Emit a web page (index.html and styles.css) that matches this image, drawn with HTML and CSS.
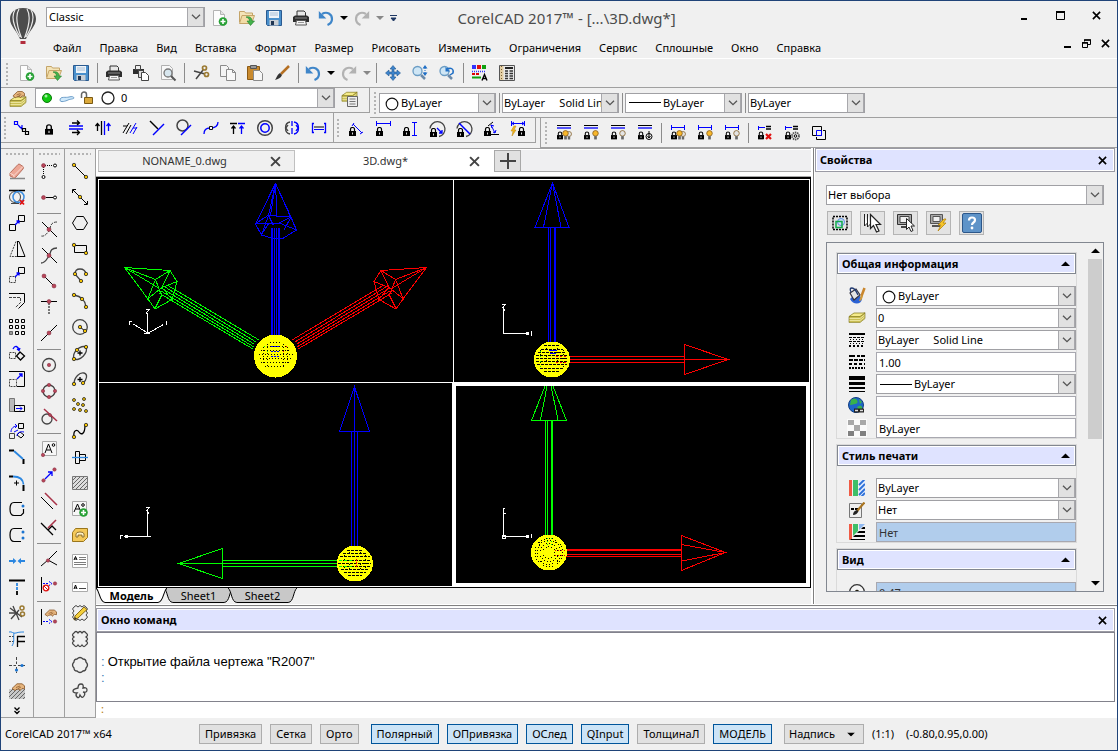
FILE: index.html
```
<!DOCTYPE html>
<html lang="ru">
<head>
<meta charset="utf-8">
<title>CorelCAD 2017</title>
<link rel="stylesheet" href="styles.css">
</head>
<body>
<svg class="defs" aria-hidden="true">
  <symbol id="new" viewBox="0 0 16 16"><path d="M1.500 .5h7l4 4v11h-11z" fill="#fdfdfd" stroke="#b4b4b4"/><path d="M8.500 .5v4h4" fill="#e4e4e4" stroke="#b4b4b4"/><circle cx="11" cy="11.500" r="4.300" fill="#27a135"/><path d="M11 9v5M8.500 11.500h5" stroke="#fff" stroke-width="1.600"/></symbol>
  <symbol id="open" viewBox="0 0 16 16"><path d="M.5 12V1.500h5l1 1.500h7v4" fill="#f4e4b8" stroke="#c4a468"/><path d="M3 5.500h12.500l-3 8H.5z" fill="#f2dca6" stroke="#c4a468"/><path d="M7 7c4-1 6 1 6 4h2.500l-4 4.500L8 11h2.500c0-2-1-3-3.500-4z" fill="#45b24c" stroke="#23802b" stroke-width=".6"/></symbol>
  <symbol id="save" viewBox="0 0 16 16"><path d="M.5 .5h15v15h-14l-1-1z" fill="#4a90cc" stroke="#2a5a90"/><path d="M3 1h10v7H3z" fill="#eef3f8"/><path d="M4 3h8M4 5h8" stroke="#a8c0d8"/><path d="M3.500 10h9v5.500h-9z" fill="#c9ced4"/><path d="M5 11h3v4H5z" fill="#1f3552"/></symbol>
  <symbol id="print" viewBox="0 0 16 16"><path d="M4 6V1h7l1.500 1.500V6" fill="#e8e8e8" stroke="#333"/><path d="M0 7l2-1.500h12L16 7v5H0z" fill="#2e2e2e"/><path d="M2 8h12" stroke="#8a8a8a"/><path d="M3.500 10.500h9l1 4.500h-11z" fill="#f4f4f4" stroke="#555"/><path d="M5 12.500h6" stroke="#999"/></symbol>
  <symbol id="undo" viewBox="0 0 16 16"><path d="M4 4C9 1 14 4 14 9c0 3-2 5-4.500 6" fill="none" stroke="#3f86c9" stroke-width="2.200"/><path d="M.8 1v7.500h7.500z" fill="#3f86c9"/></symbol>
  <symbol id="redo" viewBox="0 0 16 16"><path d="M12 4C7 1 2 4 2 9c0 3 2 5 4.500 6" fill="none" stroke="#b2b2b2" stroke-width="2.200"/><path d="M15.200 1v7.500H7.700z" fill="#b2b2b2"/></symbol>
  <symbol id="down" viewBox="0 0 8 4"><path d="M0 0h8L4 4z" fill="currentColor"/></symbol>
  <symbol id="chev" viewBox="0 0 10 6"><path d="M1 .7l4 4 4-4" fill="none" stroke="#555" stroke-width="1.300"/></symbol>
  <symbol id="x" viewBox="0 0 10 10"><path d="M1 1l8 8M9 1L1 9" fill="none" stroke="currentColor" stroke-width="1.800"/></symbol>
  <symbol id="lock" viewBox="0 0 7 9"><path d="M1.500 4V2.200a2 1.700 0 0 1 4 0V4" fill="none" stroke="#000" stroke-width="1.200"/><path d="M0 4h7v5H0z"/><path d="M3.500 5.500v2" stroke="#ddd"/></symbol>
  <symbol id="bulb" viewBox="0 0 6 9"><circle cx="3" cy="3" r="2.500" fill="currentColor" stroke="#805a20" stroke-width=".7"/><path d="M1.800 5.500h2.400V8.500H1.800z" fill="#666"/></symbol>
  <symbol id="layers" viewBox="0 0 18 12"><path d="M1 4.500v6h11l5-4v-6z" fill="#c9be52"/><path d="M1 4.500L6 1h11l-5 3.500z" fill="#f5eb8a" stroke="#8b8126" stroke-width=".8"/><path d="M1 6.500h11l5-4M1 8.500h11l5-4M1 10.500h11l5-4" fill="none" stroke="#f3ecae" stroke-width=".8"/><path d="M1 4.500v6h11l5-4v-6" fill="none" stroke="#7a711d" stroke-width=".6"/></symbol>
  <symbol id="hand" viewBox="0 0 14 8"><path d="M1 5.500L6 .8h5l2.500 2v3l-2.500-.3-2 2-1-1.500-3 .5-1 1z" fill="#e6b57e" stroke="#835123" stroke-width=".8"/><path d="M5 4.500l4-1.500M7 5.500l3-1.500" stroke="#835123" stroke-width=".7"/></symbol>
  <symbol id="hatch" viewBox="0 0 16 10"><path d="M0 0h16v10H0z" fill="#c8c8c8"/><path d="M0 4l4-4M0 8l8-8M2 10L12 0M6 10L16 0M10 10l6-6M14 10l2-2" stroke="#666"/></symbol>
  <symbol id="ring" viewBox="0 0 12 12"><circle cx="6" cy="6" r="5" fill="#fff" stroke="#111"/></symbol>
</svg>
<div class="window">
  <header class="head">
    <svg class="logo" viewBox="0 0 28 38" aria-label="CorelCAD"><path d="M14 1C5 1 1 6 1 12c0 7 7 12 10 20h6c3-8 10-13 10-20 0-6-4-11-13-11z" fill="#4c4c4c"/><path d="M10 2C7 7 7 17 12.500 31M18 2c3 5 3 15-2.500 29M6 3C2 9 4 18 11 30M22 3c4 6 2 15-5 27" fill="none" stroke="#e9e9e9" stroke-width="1.200"/><path d="M11.500 32h5l-.5 1.500h-4z" fill="#eee"/><path d="M11.500 34h5v3h-5z" fill="#b22d3c"/></svg>
    <div class="head-main">
      <div class="titlebar">
        <div class="combo workspace"><select aria-label="Рабочее пространство"><option>Classic</option></select><span class="arr"><svg width="10" height="6"><use href="#chev"/></svg></span></div>
        <div class="quick">
          <button aria-label="Создать"><svg class="i"><use href="#new"/></svg></button>
          <button aria-label="Открыть"><svg class="i"><use href="#open"/></svg></button>
          <button aria-label="Сохранить"><svg class="i"><use href="#save"/></svg></button>
          <button aria-label="Печать"><svg class="i"><use href="#print"/></svg></button>
          <button class="slim" aria-label="Отменить"><svg class="i"><use href="#undo"/></svg></button>
          <button class="caret" aria-label="История отмены"><svg width="8" height="4"><use href="#down"/></svg></button>
          <button class="slim" aria-label="Повторить"><svg class="i"><use href="#redo"/></svg></button>
          <button class="caret dim" aria-label="История повтора"><svg width="8" height="4"><use href="#down"/></svg></button>
          <button class="caret more" aria-label="Настроить"><svg width="7" height="7" viewBox="0 0 7 7"><path d="M0 .5h7M1 3h5L3.500 6z" fill="#1f3864" stroke="#1f3864"/></svg></button>
        </div>
        <h1>CorelCAD 2017™ - [...\3D.dwg*]</h1>
        <div class="winbtns">
          <button aria-label="Свернуть"><svg width="9" height="9"><path d="M1 8h6" stroke="#000" stroke-width="2"/></svg></button>
          <button aria-label="Развернуть"><svg width="9" height="9"><path d="M.5 0v8.500h8V0" fill="none" stroke="#000"/><path d="M0 1h9" stroke="#000" stroke-width="2"/></svg></button>
          <button aria-label="Закрыть"><svg width="9" height="9"><use href="#x"/></svg></button>
        </div>
      </div>
      <div class="menubar">
        <nav>
          <a href="#">Файл</a><a href="#">Правка</a><a href="#">Вид</a><a href="#">Вставка</a><a href="#">Формат</a><a href="#">Размер</a><a href="#">Рисовать</a><a href="#">Изменить</a><a href="#">Ограничения</a><a href="#">Сервис</a><a href="#">Сплошные</a><a href="#">Окно</a><a href="#">Справка</a>
        </nav>
        <div class="mdi">
          <button aria-label="Свернуть чертёж"><svg width="9" height="9"><path d="M1 8h7" stroke="#000" stroke-width="2"/></svg></button>
          <button aria-label="Восстановить чертёж"><svg width="9" height="9"><path d="M2.500 2.500V1h6v4.500H6M.5 3.500h5v5h-5z" fill="none" stroke="#000"/><path d="M2 1h7M0 4h6" stroke="#000" stroke-width="1.500"/></svg></button>
          <button aria-label="Закрыть чертёж"><svg width="9" height="9"><use href="#x"/></svg></button>
        </div>
      </div>
    </div>
  </header>

  <div class="bar std">
    <i class="grip"></i>
    <button aria-label="Создать"><svg class="i"><use href="#new"/></svg></button>
    <button aria-label="Открыть"><svg class="i"><use href="#open"/></svg></button>
    <button aria-label="Сохранить"><svg class="i"><use href="#save"/></svg></button>
    <i class="sep"></i>
    <button aria-label="Печать"><svg class="i"><use href="#print"/></svg></button>
    <button aria-label="Пакетная печать"><svg class="i" viewBox="0 0 16 16"><path d="M0 4h11v5H0z" fill="#2e2e2e"/><path d="M2.500 .5h5v4h-5z" fill="#eee" stroke="#444"/><path d="M5.500 5.500h5v7h-5z" fill="#ddd" stroke="#444"/><path d="M8.500 7.500h4l3 3v5h-7z" fill="#fff" stroke="#444"/></svg></button>
    <button aria-label="Просмотр печати"><svg class="i" viewBox="0 0 16 16"><path d="M1.500 .5h8l3 3v11h-11z" fill="#f8f8f8" stroke="#b0b0b0"/><circle cx="8" cy="8" r="4" fill="#d7e6ee" stroke="#777" stroke-width="1.300"/><path d="M11 11l4.500 4.500" stroke="#555" stroke-width="2"/></svg></button>
    <i class="sep"></i>
    <button aria-label="Вырезать"><svg class="i" viewBox="0 0 16 16"><path d="M1 6l11 3M3 14l7-9" stroke="#444" stroke-width="1.500"/><circle cx="11.500" cy="3" r="2" fill="none" stroke="#9b7a32" stroke-width="1.700"/><circle cx="13.500" cy="9.500" r="2" fill="none" stroke="#9b7a32" stroke-width="1.700"/></svg></button>
    <button aria-label="Копировать"><svg class="i" viewBox="0 0 16 16"><path d="M.5 .5h6l2 2v9h-8z" fill="#f4f4f4" stroke="#8a8a8a"/><path d="M6.500 4.500h6l3 3v8h-9z" fill="#f8f8f8" stroke="#8a8a8a"/><path d="M12.500 4.500v3h3" fill="none" stroke="#8a8a8a"/></svg></button>
    <button aria-label="Вставить"><svg class="i" viewBox="0 0 16 16"><path d="M.5 1.500h12v13H.5z" fill="#c98a2e" stroke="#8b5a14"/><path d="M3.500 .5h6v3h-6z" fill="#999" stroke="#555"/><path d="M6.500 5.500h6l3 3v7h-9z" fill="#f6f6f6" stroke="#8a8a8a"/></svg></button>
    <button aria-label="Копировать свойства"><svg class="i" viewBox="0 0 16 16"><path d="M15 1L7 9" stroke="#b56f22" stroke-width="2.500"/><path d="M8 10L6 8c-3 2-3 4-5 7 3-1 6-2 7-5z" fill="#333"/></svg></button>
    <i class="sep"></i>
    <button class="slim" aria-label="Отменить"><svg class="i"><use href="#undo"/></svg></button>
    <button class="caret" aria-label="История отмены"><svg width="8" height="4"><use href="#down"/></svg></button>
    <button class="slim" aria-label="Повторить"><svg class="i"><use href="#redo"/></svg></button>
    <button class="caret dim" aria-label="История повтора"><svg width="8" height="4"><use href="#down"/></svg></button>
    <i class="sep"></i>
    <button aria-label="Панорамирование"><svg class="i" viewBox="0 0 16 16"><path d="M8 .5l3 3.500H9v3h3V5l3.500 3-3.500 3V9H9v3h2l-3 3.500L5 12h2V9H4v2L.5 8 4 5v2h3V4H5z" fill="#3d84cc" stroke="#22588f" stroke-width=".6"/></svg></button>
    <button aria-label="Масштаб"><svg class="i" viewBox="0 0 16 16"><circle cx="5.500" cy="6" r="4.500" fill="#cfe6f5" stroke="#6a9cc4" stroke-width="1.300"/><path d="M9 10l4 4" stroke="#6a8aaa" stroke-width="2.500"/><path d="M13 0l2.500 3.500h-5zM13 11l2.500-3.500h-5z" fill="#1f6fc6"/><path d="M13 3v5" stroke="#1f6fc6" stroke-dasharray="1 1"/></svg></button>
    <button aria-label="Предыдущий вид"><svg class="i" viewBox="0 0 16 16"><circle cx="5.500" cy="6" r="4.500" fill="#cfe6f5" stroke="#6a9cc4" stroke-width="1.300"/><path d="M9 10l4 4" stroke="#6a8aaa" stroke-width="2.500"/><path d="M8 4c4-2 7 0 6 4l-3 2" fill="none" stroke="#1f6fc6" stroke-width="1.500"/><path d="M6.500 2v4.500H11z" fill="#1f6fc6"/></svg></button>
    <i class="sep"></i>
    <button aria-label="Свойства объектов"><svg class="i" viewBox="0 0 16 16"><path d="M0 0h4v4H0z" fill="#33f"/><path d="M5 0h4v4H5z" fill="#e01010"/><path d="M10 0h4v4h-4z" fill="#10a010"/><path d="M0 6.500h14" stroke="#33f" stroke-width="1.500" stroke-dasharray="1 1"/><path d="M0 9h8" stroke="#d00" stroke-width="2" stroke-dasharray="3 1"/><path d="M0 12.500h9" stroke="#10a010" stroke-width="2"/><path d="M10 15.500l2.500-6 2.500 6M11 13.500h3" fill="none" stroke="#000" stroke-width="1.400"/></svg></button>
    <button aria-label="Палитра"><svg class="i" viewBox="0 0 16 16"><path d="M.5 .5h15v15H.5z" fill="#e8e8e8" stroke="#555"/><path d="M1 1h3.500v14H1z" fill="#e4cfa4"/><path d="M2.500 1v14" stroke="#7a5e33" stroke-dasharray="1 2"/><path d="M6 3h8" stroke="#222" stroke-width="2"/><path d="M6 6h3M10.500 6H14M6 8.500h3M10.500 8.500H14M6 11h3M10.500 11H14M6 13.500h3M10.500 13.500H14" stroke="#333" stroke-width="1.300"/></svg></button>
  </div>

  <div class="bands">
    <div class="band layers">
      <button class="lay" aria-label="Менеджер слоёв"><svg width="18" height="18" viewBox="0 0 18 18"><use href="#layers" y="6" width="18" height="12"/><use href="#hand" x="3" width="13" height="9"/></svg></button>
      <div class="combo layer">
        <span class="pre"><svg width="76" height="14" viewBox="0 0 76 14"><circle cx="6" cy="7" r="4.500" fill="#12c912" stroke="#0a7a0a"/><circle cx="5" cy="5" r="1.500" fill="#a6f0a6"/><path d="M19 9c0-4 6-2 9-3s5 0 5 1-4 1-6 2-8 3-8 0z" fill="#cfe9fb" stroke="#6f9fca"/><path d="M40.500 7V3.500a2.500 2.500 0 0 1 5 0V7" fill="none" stroke="#666" stroke-width="1.500"/><path d="M43.500 6.500h8v6h-8z" fill="#dba93c" stroke="#7a5a14"/><circle cx="67" cy="7" r="6" fill="#fff" stroke="#222" stroke-width="1.300"/></svg></span>
        <select aria-label="Слой"><option>0</option></select><span class="arr"><svg width="10" height="6"><use href="#chev"/></svg></span></div>
      <button class="lay" aria-label="Свойства слоя"><svg width="18" height="16" viewBox="0 0 18 16"><use href="#layers" width="17" height="12"/><path d="M6.500 5.500h10v10h-10z" fill="#eee" stroke="#666"/><path d="M8.500 8h6M8.500 10.500h6M8.500 13h6" stroke="#777"/></svg></button>
    </div>
    <div class="band props-bar">
      <i class="grip"></i>
      <div class="combo"><span class="pre ringed"><svg width="14" height="14"><use href="#ring"/></svg></span><select aria-label="Цвет линии"><option>ByLayer</option></select><span class="arr"><svg width="10" height="6"><use href="#chev"/></svg></span></div>
      <i class="sep"></i>
      <div class="combo"><select aria-label="Стиль линии"><option>ByLayer &nbsp; &nbsp; Solid Line</option></select><span class="arr"><svg width="10" height="6"><use href="#chev"/></svg></span></div>
      <i class="sep"></i>
      <div class="combo"><span class="pre tight"><svg width="32" height="3"><path d="M0 1.500h32" stroke="#000"/></svg></span><select aria-label="Толщина линии"><option>ByLayer</option></select><span class="arr"><svg width="10" height="6"><use href="#chev"/></svg></span></div>
      <i class="sep"></i>
      <div class="combo"><select aria-label="Стиль печати"><option>ByLayer</option></select><span class="arr"><svg width="10" height="6"><use href="#chev"/></svg></span></div>
    </div>
    <div class="band geo">
      <i class="grip"></i>
      <button aria-label="Совпадение"><svg class="i" viewBox="0 0 16 16"><path class="b" d="M.5 1.500h3v3h-3zM4 5l5 5M5.500 7.500H8V5" stroke-width="1.200"/><path class="k" d="M8.500 8.500h3v3h-3zM11.500 11.500h3v3h-3z" stroke-width="1.200"/></svg></button>
      <button aria-label="Фиксация"><svg class="i" viewBox="0 0 16 16"><use href="#lock" x="4" y="4" width="8" height="11"/></svg></button>
      <button aria-label="Горизонтальность"><svg class="i" viewBox="0 0 16 16"><path class="b" d="M1 6h14M1 9h14" stroke-width="1.500"/><path class="k" d="M4 3h7M9 .5L11.500 3 9 5M4 12.500h7M9 10l2.500 2.500L9 15" stroke-width="1.300"/></svg></button>
      <button aria-label="Вертикальность"><svg class="i" viewBox="0 0 16 16"><path class="b" d="M9.500 1v14M13.500 3v8M11.500 6l2-2.500 2 2.500" stroke-width="1.300"/><path class="k" d="M6.500 1v14M2.500 3v8M.5 6l2-2.500 2 2.500" stroke-width="1.300"/></svg></button>
      <button aria-label="Параллельность"><svg class="i" viewBox="0 0 16 16"><path class="k" d="M1 13L7 3M4 14l5-9M1 6h4"/><path class="b" d="M8 13l6-10M11 14l4-7M11 8h4"/></svg></button>
      <button aria-label="Перпендикулярность"><svg class="i" viewBox="0 0 16 16"><path class="k" d="M1 1l8 8" stroke-width="1.500"/><path class="b" d="M4 15L15 4" stroke-width="1.500"/></svg></button>
      <button aria-label="Касание"><svg class="i" viewBox="0 0 16 16"><circle class="g" cx="6.500" cy="5.500" r="5.500" stroke-width="1.500"/><path class="b" d="M5 15L15 5" stroke-width="1.500"/></svg></button>
      <button aria-label="Сглаживание"><svg class="i" viewBox="0 0 16 16"><path class="b" d="M1 14c0-5 3-6 6-6s8-1 8-6" stroke-width="1.300"/><path d="M6.500 6.500h3v3h-3z" fill="#fff" stroke="#111"/></svg></button>
      <button aria-label="Коллинеарность"><svg class="i" viewBox="0 0 16 16"><path class="k" d="M0 3.500h7M3.500 6v8M1.500 8.500l2-2.500 2 2.500" stroke-width="1.300"/><path class="b" d="M8 3.500h7M11.500 6v8M9.500 8.500l2-2.500 2 2.500" stroke-width="1.300"/></svg></button>
      <button aria-label="Концентричность"><svg class="i" viewBox="0 0 16 16"><circle class="g" cx="8" cy="8" r="7.300" stroke-width="1.500"/><circle class="b" cx="8" cy="8" r="4.200" stroke-width="1.500"/></svg></button>
      <button aria-label="Симметрия"><svg class="i" viewBox="0 0 16 16"><path class="g" d="M6 2C0 3 0 13 6 14M4 5l-2 3 2 3" stroke-width="1.300"/><path class="b" d="M10 2c6 1 6 11 0 12M12 5l2 3-2 3M8 1v5M8 8v6" stroke-width="1.300"/></svg></button>
      <button aria-label="Равенство"><svg class="i" viewBox="0 0 16 16"><path class="b" d="M3 3.500H1.500v9H3M13 3.500h1.500v9H13" stroke-width="1.300"/><path class="k" d="M3 7h10"/><path class="b" d="M3 9.500h10"/></svg></button>
    </div>
    <div class="band dims">
      <i class="grip"></i>
      <button aria-label="Выровненный"><svg class="i" viewBox="0 0 16 16"><use href="#lock" x="1" y="6" width="7" height="9"/><path class="b" d="M5 3l9 9M4 5l2-3M12 13l3-2"/></svg></button>
      <button aria-label="Горизонтальный"><svg class="i" viewBox="0 0 16 16"><use href="#lock" x="1" y="6" width="7" height="9"/><path class="b" d="M1.500 0v5M15.500 0v5M1 2.500h14"/></svg></button>
      <button aria-label="Вертикальный"><svg class="i" viewBox="0 0 16 16"><use href="#lock" x="1" y="6" width="7" height="9"/><path class="b" d="M12.500 2v12M10 1.500h5M10 14.500h5"/></svg></button>
      <button aria-label="Радиальный"><svg class="i" viewBox="0 0 16 16"><path class="g" d="M1 7.500a7.500 7.500 0 1 1 9 8" stroke-width="1.300"/><path class="b" d="M8 7l5 5M13 9v3h-3" stroke-width="1.300"/><use href="#lock" x="1" y="7" width="7" height="9"/></svg></button>
      <button aria-label="Диаметральный"><svg class="i" viewBox="0 0 16 16"><path class="g" d="M1 7.500a7.500 7.500 0 1 1 9 8" stroke-width="1.300"/><path class="b" d="M3 2l11 11" stroke-width="1.500"/><use href="#lock" x="1" y="7" width="7" height="9"/></svg></button>
      <button aria-label="Угловой"><svg class="i" viewBox="0 0 16 16"><use href="#lock" x="1" y="6" width="7" height="9"/><path class="b" d="M8 4l4 8M9 7l-1-3 3 1M13 9l-1 3-2-1"/><path class="k" d="M5 5l5-4M8 13.500h8"/></svg></button>
      <button aria-label="Преобразовать"><svg class="i" viewBox="0 0 16 16"><path class="b" d="M1.500 0v5M14.500 0v5M1 2.500h14M4 1L2 2.500 4 4M12 1l2 1.500L12 4"/><path d="M4 5L1 10h2l-1 5 4-6H4l2-4z" fill="#f2b71c" stroke="#b9820c" stroke-width=".5"/><use href="#lock" x="8" y="6" width="7" height="9"/></svg></button>
    </div>
    <div class="band cons">
      <i class="grip"></i>
      <button aria-label="Показать или скрыть"><svg class="i" viewBox="0 0 16 16"><path class="k" d="M1 .5h14"/><path class="b" d="M1 3h14" stroke-width="1.300"/><use href="#lock" x="1" y="6" width="6" height="9"/><use href="#bulb" class="off" x="10" y="6" width="6" height="9"/><use href="#bulb" class="lit" x="6" y="5" width="7" height="10"/></svg></button>
      <button aria-label="Показать все"><svg class="i" viewBox="0 0 16 16"><path class="k" d="M1 .5h14"/><path class="b" d="M1 3h14" stroke-width="1.300"/><use href="#lock" x="1" y="6" width="6" height="9"/><use href="#bulb" class="lit" x="9" y="5" width="7" height="10"/></svg></button>
      <button aria-label="Скрыть все"><svg class="i" viewBox="0 0 16 16"><path class="k" d="M1 .5h14"/><path class="b" d="M1 3h14" stroke-width="1.300"/><use href="#lock" x="1" y="6" width="6" height="9"/><use href="#bulb" class="off" x="9" y="5" width="7" height="10"/></svg></button>
      <button aria-label="Автоограничение"><svg class="i" viewBox="0 0 16 16"><path class="k" d="M1 .5h14"/><path class="b" d="M1 3h14" stroke-width="1.300"/><use href="#lock" x="1" y="6" width="6" height="9"/><circle class="k" cx="12" cy="11.500" r="3"/><path class="k" d="M12 6v7M10.500 11l1.500 2 1.500-2"/></svg></button>
      <i class="sep"></i>
      <button aria-label="Показать или скрыть размерные"><svg class="i" viewBox="0 0 16 16"><path class="b" d="M1.500 0v5M14.500 0v5M1 2.500h14"/><use href="#lock" x="1" y="6" width="6" height="9"/><use href="#bulb" class="off" x="10" y="6" width="6" height="9"/><use href="#bulb" class="lit" x="6" y="5" width="7" height="10"/></svg></button>
      <button aria-label="Показать размерные"><svg class="i" viewBox="0 0 16 16"><path class="b" d="M1.500 0v5M14.500 0v5M1 2.500h14"/><use href="#lock" x="1" y="6" width="6" height="9"/><use href="#bulb" class="lit" x="9" y="5" width="7" height="10"/></svg></button>
      <button aria-label="Скрыть размерные"><svg class="i" viewBox="0 0 16 16"><path class="b" d="M1.500 0v5M14.500 0v5M1 2.500h14"/><use href="#lock" x="1" y="6" width="6" height="9"/><use href="#bulb" class="off" x="9" y="5" width="7" height="10"/></svg></button>
      <i class="sep"></i>
      <button aria-label="Удалить ограничения"><svg class="i" viewBox="0 0 16 16"><path class="b" d="M1.500 1v4M1 2.500h7"/><path class="k" d="M9 1.500h5M9 4h5" stroke-width="1.300"/><use href="#lock" x="1" y="6" width="6" height="9"/><path d="M9 9l5 5M14 9l-5 5" stroke="#e01010" stroke-width="2.200"/></svg></button>
      <button aria-label="Параметры ограничений"><svg class="i" viewBox="0 0 16 16"><path class="b" d="M1.500 1v4M1 2.500h7"/><path class="k" d="M9 1.500h5M9 4h5" stroke-width="1.300"/><use href="#lock" x="1" y="6" width="6" height="9"/><circle cx="11.500" cy="11" r="3.500" fill="#eee" stroke="#555" stroke-width="1.800" stroke-dasharray="1.500 .7"/><circle class="k" cx="11.500" cy="11" r="1.300"/></svg></button>
      <button aria-label="Группа"><svg class="i" viewBox="0 0 16 16"><path class="k" d="M1.500 1.500h9v9h-9zM5.500 12v2.500h9v-9H12"/><path class="b" d="M5.500 5.500h5v5h-5z"/></svg></button>
    </div>
  </div>

  <main class="work">
    <div class="col">
      <i class="hgrip"></i>
      <button aria-label="Удалить"><svg class="i" viewBox="0 0 16 16"><path d="M1 15.500h15" stroke="#888" stroke-width="1.500"/><path d="M1 10l8-8.500q1-1 2 0l3 2q1 1 0 2.500l-7 8q-1 1-2.500.5L1 13z" fill="#eda796" stroke="#b9705f"/><path d="M1 10l4 2.500 9-9M5 12.500v2" fill="none" stroke="#fbdcd3"/></svg></button>
      <button aria-label="Удалить дубликаты"><svg class="i" viewBox="0 0 16 16"><path class="k" d="M0 1.500h16" stroke-width="1.500"/><circle class="g" cx="6" cy="8" r="5.500"/><circle cx="9.500" cy="8" r="5.500" fill="none" stroke="#3a8de0" stroke-width="1.500"/><path class="g" d="M2 14.500h8"/><path d="M11 11l4 4.500M15 11l-4 4.500" stroke="#e01010" stroke-width="1.800"/></svg></button>
      <button aria-label="Переместить"><svg class="i" viewBox="0 0 16 16"><path class="k" d="M.5 9.500h6v6h-6zM9.500 .5h6v6h-6z"/><path class="b" d="M6 10l4-4M7.500 6H10v2.500" stroke-width="1.300"/></svg></button>
      <button aria-label="Зеркало"><svg class="i" viewBox="0 0 16 16"><path class="k" d="M8.500 0v16M9 15.500h7L10 .5H9"/><path class="g" d="M7 .5L1 15.500h7" stroke-dasharray="2 1"/></svg></button>
      <button aria-label="Копировать объект"><svg class="i" viewBox="0 0 16 16"><path class="g" d="M.5 9.500h6v6h-6z" stroke-dasharray="2 1"/><path class="k" d="M9.500 .5h6v6h-6z"/><path class="b" d="M6 10l4-4M7.500 6H10v2.500" stroke-width="1.300"/></svg></button>
      <button aria-label="Смещение"><svg class="i" viewBox="0 0 16 16"><path class="k" d="M0 .5h15.500v9l-6 6"/><path class="g" d="M0 4.500h11.500v5l-5 5" stroke-dasharray="3 1"/></svg></button>
      <button aria-label="Массив"><svg class="i" viewBox="0 0 16 16"><path class="k" d="M.5 .5h3v3h-3zM6.500 .5h3v3h-3zM12.500 .5h3v3h-3zM.5 6.500h3v3h-3zM6.500 6.500h3v3h-3zM12.500 6.500h3v3h-3zM6.500 12.500h3v3h-3zM12.500 12.500h3v3h-3z"/><path d="M.5 12.500h3v3h-3z" fill="#999" stroke="#666"/></svg></button>
      <button aria-label="Повернуть"><svg class="i" viewBox="0 0 16 16"><path class="g" d="M.5 7.500h6v6h-6z" stroke-dasharray="2 1"/><path class="k" d="M11 7l4.500 4-4 4-4-4z" stroke-width="1.300"/><path class="b" d="M4 4c2-4 5-3 6 1M8 4l2 1.500L11 3" stroke-width="1.300"/></svg></button>
      <button aria-label="Масштабировать"><svg class="i" viewBox="0 0 16 16"><path class="k" d="M0 .5h15.500v15H8"/><path class="g" d="M.5 8.500h7v7h-7z" stroke-dasharray="2 1"/><path class="b" d="M8 8l5-5M10 3h3v3" stroke-width="1.300"/></svg></button>
      <button aria-label="Растянуть"><svg class="i" viewBox="0 0 16 16"><path d="M.5 1.500h5v13h-5z" fill="#bbb" stroke="#777"/><path class="k" d="M5.500 8.500h10v6h-10z"/><path class="b" d="M7 11.500h6M11 9.500l2 2-2 2"/></svg></button>
      <button aria-label="Массив по траектории"><svg class="i" viewBox="0 0 16 16"><path class="k" d="M9.500 .5h5v5h-5zM11 9l4 3-3 3-4-3z"/><path class="g" d="M.5 10.500h5v5h-5z"/><path class="b" d="M2 9c0-4 3-6 6-6M6 1l2 2-2 2M5 9l4-2M8 13c0-3 3-5 7-4"/></svg></button>
      <button aria-label="Фаска"><svg class="i" viewBox="0 0 16 16"><path class="k" d="M0 1.500h5M14.500 10v5" stroke-width="2"/><path class="c" d="M5 2l9 8" stroke-width="1.800"/></svg></button>
      <button aria-label="Скругление"><svg class="i" viewBox="0 0 16 16"><path class="k" d="M0 1.500h4M14.500 10v6" stroke-width="2"/><path class="c" d="M4 1.500q10 0 10.500 8" stroke-width="1.800"/><path class="k" d="M7.500 5.500v5M5 8h5"/></svg></button>
      <button aria-label="Разорвать"><svg class="i" viewBox="0 0 16 16"><path class="k" d="M14.500 8v4l-2.500 2.500H5q-4 0-4-6.500t4-6.500h8" stroke-width="1.200"/><circle cx="14" cy="5" r="1.500" fill="#1b74d0"/></svg></button>
      <button aria-label="Разорвать в точке"><svg class="i" viewBox="0 0 16 16"><path class="k" d="M12 14.500H5q-4 0-4-6.500t4-6.500h8" stroke-width="1.200"/><circle cx="14" cy="5" r="1.500" fill="#1b74d0"/><circle cx="14" cy="11" r="1.500" fill="#1b74d0"/></svg></button>
      <button aria-label="Соединить"><svg class="i" viewBox="0 0 16 16"><path class="c" d="M0 8h5M11 8h5" stroke-width="1.800"/><path d="M4 5l3.500 3L4 11zM12 5L8.500 8l3.500 3z" fill="#2a86e0"/></svg></button>
      <button aria-label="Удлинить"><svg class="i" viewBox="0 0 16 16"><path class="k" d="M0 1.500h16M8 12v4" stroke-width="1.800"/><path class="c" d="M8 4v8" stroke-width="1.800" stroke-dasharray="3 1"/></svg></button>
      <button aria-label="Обрезать"><svg class="i" viewBox="0 0 16 16"><path d="M4 1l6 14M1 3l12 9M0 8h9M2 14l8-9" stroke="#444" stroke-width="1.300"/><circle cx="13" cy="3" r="2" fill="none" stroke="#9b7a32" stroke-width="1.500"/><circle cx="13.500" cy="9" r="2" fill="none" stroke="#9b7a32" stroke-width="1.500"/></svg></button>
      <button aria-label="Усиленная обрезка"><svg class="i" viewBox="0 0 16 16"><path class="k" d="M8.500 5v11M8 5.500h8M8 10.500h8" stroke-width="1.300"/><path class="g" d="M0 5.500h6M0 10.500h6" stroke-dasharray="2 1"/><path class="c" d="M0 1c3-1 4 2 7 1s5-1 8-1M5 2c-1 5 1 8-2 13"/></svg></button>
      <button aria-label="Разделить"><svg class="i" viewBox="0 0 16 16"><path class="g" d="M7.500 0v7M0 8.500h7M9 8.500h7M7.500 10v6" stroke-dasharray="3 1.500"/><circle cx="13" cy="8.500" r="1.600" fill="#1b74d0"/><circle cx="7.500" cy="13" r="1.600" fill="#1b74d0"/></svg></button>
      <button aria-label="Изменить штриховку"><svg class="i" viewBox="0 0 16 16"><use href="#hatch" y="6" width="16" height="10"/><use href="#hand" x="2" width="14" height="8"/></svg></button>
      <button class="expand" aria-label="Ещё"><svg width="6" height="8" viewBox="0 0 6 8"><path d="M.5 .5L3 3 5.500 .5M.5 4L3 6.500 5.500 4" fill="none" stroke="#000" stroke-width="1.300"/></svg></button>
    </div>
    <div class="col">
      <i class="hgrip"></i>
      <button aria-label="Временная точка"><svg class="i" viewBox="0 0 16 16"><path class="k" d="M4 2.500h8M2.500 4v8" stroke-dasharray="1 1"/><circle class="r" cx="2.500" cy="2.500" r="2"/><circle class="w" cx="14" cy="2.500" r="1.500"/><circle class="w" cx="2.500" cy="14" r="1.500"/></svg></button>
      <button aria-label="От точки"><svg class="i" viewBox="0 0 16 16"><path class="k" d="M5 8.500h7"/><circle class="r" cx="2.500" cy="8.500" r="2"/><circle class="w" cx="14" cy="8.500" r="1.500"/></svg></button>
      <i class="hsep"></i>
      <button aria-label="Пересечение"><svg class="i" viewBox="0 0 16 16"><path class="k" d="M1 1l15 15" /><path class="g" d="M16 1C8 1 10 8 8 10S4 16 0 15" stroke-dasharray="3 1"/><circle class="r" cx="8" cy="8.500" r="2"/></svg></button>
      <button aria-label="Мнимое пересечение"><svg class="i" viewBox="0 0 16 16"><path class="k" d="M1 1l15 15"/><path class="g" d="M16 1C8 1 10 7 8 9S5 16 0 16" stroke-width="1.300"/><circle class="r" cx="8" cy="8.500" r="2"/></svg></button>
      <button aria-label="Конечная точка"><svg class="i" viewBox="0 0 16 16"><path class="k" d="M3 3l10 10"/><circle class="r" cx="3" cy="3" r="2"/><circle class="r" cx="13" cy="13" r="2"/></svg></button>
      <button aria-label="Перпендикуляр"><svg class="i" viewBox="0 0 16 16"><path class="k" d="M0 2.500h16" /><path class="k" d="M8 4v12" stroke-dasharray="2 1"/><circle class="r" cx="8" cy="2.500" r="2"/></svg></button>
      <button aria-label="Середина"><svg class="i" viewBox="0 0 16 16"><path class="k" d="M0 16L16 0"/><circle class="r" cx="8" cy="8" r="2"/></svg></button>
      <i class="hsep"></i>
      <button aria-label="Центр"><svg class="i" viewBox="0 0 16 16"><circle class="g" cx="8" cy="8" r="6.500" stroke-width="1.300"/><circle class="r" cx="8" cy="8" r="1.700"/></svg></button>
      <button aria-label="Квадрант"><svg class="i" viewBox="0 0 16 16"><circle class="g" cx="8" cy="8" r="6" stroke-width="1.300"/><circle class="r" cx="8" cy="2" r="1.700"/><circle class="r" cx="8" cy="14" r="1.700"/><circle class="r" cx="2" cy="8" r="1.700"/><circle class="r" cx="14" cy="8" r="1.700"/></svg></button>
      <button aria-label="Касательная"><svg class="i" viewBox="0 0 16 16"><circle class="g" cx="6" cy="10" r="5" stroke-width="1.300"/><path d="M3 0l13 12" stroke="#a83248" stroke-width="1.500"/><circle class="r" cx="9" cy="6" r="1.500"/></svg></button>
      <i class="hsep"></i>
      <button aria-label="Точка вставки"><svg class="i" viewBox="0 0 16 16"><path d="M1.500 .5h14v14h-14z" fill="#f7f7f7" stroke="#aaa"/><path class="k" d="M4 12l3.500-9 3.500 9M5.500 9h4"/><circle class="k" cx="12.500" cy="4" r="1.300"/><circle class="r" cx="2" cy="14" r="1.700"/></svg></button>
      <button aria-label="Между точками"><svg class="i" viewBox="0 0 16 16"><path class="b" d="M4 12l7-7M7 5h4v4" stroke-width="1.300"/><circle class="r" cx="2.500" cy="13.500" r="1.700"/><circle class="r" cx="13.500" cy="2.500" r="1.700"/></svg></button>
      <button aria-label="Параллельно"><svg class="i" viewBox="0 0 16 16"><path class="k" d="M0 4l12 12"/><path d="M4 0l12 12" stroke="#a83248" stroke-width="1.500"/></svg></button>
      <button aria-label="Нормаль"><svg class="i" viewBox="0 0 16 16"><path class="k" d="M0 4l12 12M7 11l4-4 4 4" stroke-width="1.300"/><path d="M7 9l8-8" stroke="#a83248" stroke-width="1.600"/></svg></button>
      <i class="hsep"></i>
      <button aria-label="Ближайшая"><svg class="i" viewBox="0 0 16 16"><path class="k" d="M0 15l7-6 9 5M7 9l9-9"/><circle class="r" cx="7" cy="9.500" r="1.700"/></svg></button>
      <button aria-label="Без привязки"><svg class="i" viewBox="0 0 16 16"><path class="k" d="M.5 0v16"/><path class="b" d="M2 6.500h6M8 4.500l3 2-3 2" stroke-dasharray="2 1"/><circle class="r" cx="14" cy="6.500" r="1.700"/><circle cx="5" cy="11" r="2.800" fill="#fff" stroke="#e01010" stroke-width="1.300"/><path d="M3 9l4 4" stroke="#e01010"/></svg></button>
      <i class="hsep"></i>
      <button aria-label="Настройки привязки"><svg class="i" viewBox="0 0 16 16"><path class="k" d="M.5 0v16"/><use href="#hand" x="3" width="13" height="8"/><path class="b" d="M2 12.500h6M8 10.500l3 2-3 2" stroke-dasharray="2 1"/><circle class="r" cx="14" cy="12.500" r="1.700"/></svg></button>
    </div>
    <div class="col">
      <i class="hgrip"></i>
      <button aria-label="Линия"><svg class="i" viewBox="0 0 16 16"><path class="k" d="M2 2l12 12"/><circle class="y" cx="2" cy="2" r="1.700"/><circle class="y" cx="14" cy="14" r="1.700"/></svg></button>
      <button aria-label="Бесконечная линия"><svg class="i" viewBox="0 0 16 16"><path class="k" d="M1 1l14 14M.5 4V.5H4M12 15.500h3.500V12"/><circle class="y" cx="8" cy="8" r="1.700"/></svg></button>
      <button aria-label="Многоугольник"><svg class="i" viewBox="0 0 16 16"><path class="k" d="M4.500 1.500h7L15.500 8l-4 6.500h-7L.5 8z"/></svg></button>
      <button aria-label="Прямоугольник"><svg class="i" viewBox="0 0 16 16"><path class="k" d="M2.500 4.500h12v7h-12z"/><circle class="y" cx="2" cy="4" r="1.700"/><circle class="y" cx="14" cy="12" r="1.700"/></svg></button>
      <button aria-label="Полилиния"><svg class="i" viewBox="0 0 16 16"><path class="g" d="M9 14L3 7q0-5 5-5t6 5" stroke-width="1.300"/><circle class="y" cx="3" cy="7" r="1.700"/><circle class="y" cx="14" cy="7" r="1.700"/><circle class="y" cx="9" cy="14" r="1.700"/></svg></button>
      <button aria-label="Дуга"><svg class="i" viewBox="0 0 16 16"><path class="g" d="M2 2q11 2 12 12" stroke-width="1.300"/><circle class="y" cx="2" cy="2" r="1.700"/><circle class="y" cx="10" cy="6" r="1.700"/><circle class="y" cx="14" cy="14" r="1.700"/></svg></button>
      <button aria-label="Окружность"><svg class="i" viewBox="0 0 16 16"><circle class="g" cx="8" cy="8" r="7.300" stroke-width="1.300"/><path class="k" d="M8 8l5 4"/><circle class="y" cx="8" cy="8" r="1.700"/><circle class="y" cx="13" cy="12" r="1.700"/></svg></button>
      <button aria-label="Эллипс"><svg class="i" viewBox="0 0 16 16"><ellipse class="g" cx="8" cy="8" rx="8" ry="4.500" transform="rotate(-45 8 8)" stroke-width="1.300"/><path class="k" d="M8 5.500v5M5.500 8h5" stroke-width="1.300"/><circle class="y" cx="2" cy="14" r="1.700"/><circle class="y" cx="14" cy="2" r="1.700"/><circle class="y" cx="5" cy="5" r="1.700"/></svg></button>
      <button aria-label="Эллиптическая дуга"><svg class="i" viewBox="0 0 16 16"><path class="g" d="M2 13C2 6 8 1 12 2s3 7-1 10" stroke-width="1.300"/><path class="k" d="M8 6v5M5.500 8.500h5" stroke-width="1.300"/><circle class="y" cx="2" cy="13" r="1.700"/><circle class="y" cx="11" cy="12" r="1.700"/></svg></button>
      <button aria-label="Точка"><svg class="i" viewBox="0 0 16 16"><circle class="y" cx="2" cy="3" r="1.500"/><circle class="y" cx="12" cy="2" r="1.500"/><circle class="y" cx="6" cy="7" r="1.500"/><circle class="y" cx="11" cy="8" r="1.500"/><circle class="y" cx="2" cy="12" r="1.500"/><circle class="y" cx="8" cy="13" r="1.500"/><circle class="y" cx="14" cy="14" r="1.500"/></svg></button>
      <button aria-label="Сплайн"><svg class="i" viewBox="0 0 16 16"><path class="k" d="M2 14C1 7 5 6 7 9s6 3 6-7" stroke-width="1.300"/><circle class="y" cx="2" cy="14" r="1.700"/><circle class="y" cx="14" cy="2" r="1.700"/></svg></button>
      <button aria-label="Вставить блок"><svg class="i" viewBox="0 0 16 16"><path class="k" d="M3.500 2.500h4v12h-4zM7.500 5.500h6v6h-6z"/><path class="c" d="M0 8.500h16" stroke-width="1.300"/></svg></button>
      <button aria-label="Штриховка"><svg class="i" viewBox="0 0 16 16"><path d="M.5 1.500h15v13H.5z" fill="#ddd" stroke="#777"/><path d="M1 5l3-3M1 9l7-7M1 13l11-11M4 14L15 3M8 14l7-7M12 14l3-3" stroke="#666"/></svg></button>
      <button aria-label="Заметка"><svg class="i" viewBox="0 0 16 16"><path d="M.5 .5h14v14H.5z" fill="#f7f7f7" stroke="#aaa"/><path class="k" d="M2 11l3.500-8L9 11M3.500 8h4"/><circle class="k" cx="11" cy="4" r="1.300"/><circle cx="11.500" cy="11.500" r="4.300" fill="#27a135"/><path d="M11.500 9v5M9 11.500h5" stroke="#fff" stroke-width="1.600"/></svg></button>
      <button aria-label="Таблица"><svg class="i" viewBox="0 0 16 16"><path d="M3.500 1.500h12v9l-4 4h-11v-9z" fill="#f4c95a" stroke="#9a761c"/><path d="M4 10V7q0-2 4-2t4 2v3h-2V8H6v2z" fill="#fff2c4" stroke="#77591a" stroke-width=".8"/></svg></button>
      <button aria-label="Многострочный текст"><svg class="i" viewBox="0 0 16 16"><path d="M.5 1.500h15v13H.5z" fill="#fff" stroke="#aaa"/><path class="k" d="M2 7l1.500-3.500L5 7M2.500 6h2"/><path class="g" d="M7 4.500h7M7 6.500h7M2 9.500h12M2 11.500h12" stroke-width=".7"/></svg></button>
      <button aria-label="Текст"><svg class="i" viewBox="0 0 16 16"><path d="M.5 3.500h15v9H.5z" fill="#fff" stroke="#aaa"/><path class="k" d="M2 10l1.500-4L5 10M2.500 9h2"/><path class="g" d="M7 9.500h7"/></svg></button>
      <button aria-label="Облако"><svg class="i" viewBox="0 0 16 16"><path class="g" d="M2 2q2-3 4 0q2-3 4 0q2-3 4 0q3 2 0 4q3 2 0 4q3 2 0 4q-2 3-4 0q-2 3-4 0q-2 3-4 0q-3-2 0-4q-3-2 0-4q-3-2 0-4z"/><path d="M2 15l1-4L12 2l3 2.500L6 13z" fill="#f3cf3b" stroke="#8a6a14"/><path d="M2 15l1-3 2 2z" fill="#333"/></svg></button>
      <button aria-label="Прямоугольное облако"><svg class="i" viewBox="0 0 16 16"><path class="g" stroke-width="1.300" d="M2 2q2-3 4 0q2-3 4 0q2-3 4 0q3 2 0 4q3 2 0 4q3 2 0 4q-2 3-4 0q-2 3-4 0q-2 3-4 0q-3-2 0-4q-3-2 0-4q-3-2 0-4z"/></svg></button>
      <button aria-label="Круглое облако"><svg class="i" viewBox="0 0 16 16"><path class="g" stroke-width="1.300" d="M5 2q3-3 6 0q3 0 3 3q3 3 0 6q0 3-3 3q-3 3-6 0q-3 0-3-3q-3-3 0-6q0-3 3-3z"/></svg></button>
      <button aria-label="Произвольное облако"><svg class="i" viewBox="0 0 16 16"><path class="g" stroke-width="1.300" d="M6 5q0-4 3-4t2 4q4-1 4 2t-4 2q3 1 1 4t-4-1q-1 4-3 2t0-4q-4 0-4-2t5-3z"/></svg></button>
    </div>

    <div class="center">
      <div class="upper">
        <section class="docs">
          <div class="tabs">
            <div class="tab"><a href="#">NONAME_0.dwg</a><button aria-label="Закрыть вкладку"><svg width="11" height="11"><use href="#x"/></svg></button></div>
            <div class="tab on"><a href="#">3D.dwg*</a><button aria-label="Закрыть вкладку"><svg width="11" height="11"><use href="#x"/></svg></button></div>
            <button class="add" aria-label="Новая вкладка"><svg width="16" height="16"><path d="M8 0v16M0 8h16" stroke="#444" stroke-width="2"/></svg></button>
            <div class="rest"></div>
          </div>
          <div class="canvas">
            <svg class="vp v1" viewBox="99 180 354 202">
              <g class="sb"><path d="M271.500 228v108M272.500 228v108M274.500 228v108M276.500 228v108M278.500 228v108M279.500 228v108"/><path d="M275.500 183.500L255.500 224l6 11 10 3h12l13-8-5.500-13-23-1.500-13 8.500M275.500 183.500l-7 32-7 19.500M275.500 183.500l-5 32M275.500 183.500l15.500 33.500-7 13M275.500 183.500l1.500 33M275.500 183.500L296.500 230l-17-7-24 1M268.500 215.500l5 10M261 235l8-12M291 217l-12 6"/></g>
              <g class="sg"><path d="M167 285l92 55M165 287l91 55M163 289l91 55M161 291l93 56M159 293l94 56"/><path d="M124.500 267.500l45.500 3 7 11-5 18-17 9.500-7-10zM124.500 267.500l31 12 14.500-9M124.500 267.500l35 21M155.500 279.500l-7.500 19 14-11 15-6M155.500 279.500l6 16-6.500 13M170 270.500l-8 17 10 12M155 308.500l7-15"/></g>
              <g class="sr" transform="translate(551) scale(-1 1)"><path d="M167 285l92 55M165 287l91 55M163 289l91 55M161 291l93 56M159 293l94 56"/><path d="M124.500 267.500l45.500 3 7 11-5 18-17 9.500-7-10zM124.500 267.500l31 12 14.500-9M124.500 267.500l35 21M155.500 279.500l-7.500 19 14-11 15-6M155.500 279.500l6 16-6.500 13M170 270.500l-8 17 10 12M155 308.500l7-15"/></g>
              <circle cx="275.500" cy="356" r="21.500" fill="#ff0"/>
              <g class="mesh" stroke-dasharray="1 2"><path d="M270 342.500h12M264 346.500h24M261 350.500h30M259 354.500h34M260 358.500h32M261 362.500h29M265 366.500h21M267 344v22M263.500 347v16M287.500 347v16M283.500 344v22"/></g>
              <path d="M271 346.500h9M271 351.500h9M271 356.500h9" stroke="#00f" stroke-dasharray="2 1"/><path d="M264 346l6 10" stroke="#0f0" stroke-dasharray="1 2"/><path d="M287 346l-6 10" stroke="#f00" stroke-dasharray="1 2"/>
              <path class="ucs" d="M147.500 313v20l-14-9M147.500 333.500l16-9M129.500 325v-4h2M166.500 321v4M146 309.500h3l-3 4M144 333.500h6"/>
            </svg>
            <svg class="vp v2" viewBox="454 180 355 202">
              <path class="sb" d="M548.500 228v115M550.500 228v115M554.500 228v115M555.500 228v115M552.500 183L535 227.500h34zM552.500 183l-9 44M552.500 183l8.500 44"/>
              <path class="sr" d="M560 356.500h125M560 359.500h169M560 362.500h125M684.500 344.500v30l44-15z"/>
              <circle cx="552" cy="359.500" r="18" fill="#ff0"/>
              <path class="mesh" stroke-dasharray="3 1" d="M544 345.500h16M541 349.500h22M538 352.500h28M536 355.500h32M536 358.500h32M536 361.500h32M537 364.500h30M540 368.500h24M544 371.500h16"/>
              <path class="mesh" d="M540.500 350v18M546.500 348v20M557.500 348v20M563.500 350v18" stroke-dasharray="1 3"/>
              <path d="M549 350.500h8M550 353.500h6" stroke="#00f"/><path d="M556 356.500h10M556 362.500h10" stroke="#f00" stroke-dasharray="2 2"/><path d="M540 351v16" stroke="#0f0" stroke-dasharray="1 4"/>
              <path class="ucs" d="M503.500 308v25.500h24M502 304.500h3l-2 3 2 3M526 332.500h2v2h-2M531 331v5"/>
            </svg>
            <svg class="vp v3" viewBox="99 383 354 203">
              <path class="sb" d="M351.500 431v116M354.500 387v160M357.500 431v116M354.500 387l-15 44.500h30z"/>
              <path class="sg" d="M222 560.500h130M178 563.500h174M222 566.500h130M222.500 548.500v30l-44-15z"/>
              <circle cx="355" cy="563.500" r="18" fill="#ff0"/>
              <path class="mesh" stroke-dasharray="3 1" d="M347 550.500h16M343 553.500h24M340 556.500h30M339 560.500h32M338 563.500h33M339 566.500h32M341 569.500h28M344 572.500h22M348 575.500h14"/>
              <path class="mesh" d="M344.500 555v16M349.500 552v21M360.500 552v21M365.500 555v16" stroke-dasharray="1 3"/>
              <path d="M339 560.500h14M339 566.500h14" stroke="#0f0" stroke-dasharray="3 2"/><path d="M356.500 559v9" stroke="#f00" stroke-dasharray="2 1"/>
              <path class="ucs" d="M147.500 511v25.500h3M147.500 536.500h-24M146 507.500h3l-2 3 2 3M125 535.500h2v2h-2M120.500 539v-4h2"/>
            </svg>
            <svg class="vp v4" viewBox="456 386 350 197">
              <path class="sg" d="M545.500 421v116M547.500 421v116M551.500 421v116M552.500 421v116M549 376l-17.500 44.500h35zM549 376l-8.500 44M549 376l9 44"/>
              <path class="sr" d="M565 549.500h117M565 550.500h117M565 554.500h117M565 556.500h117M681.500 535.500v35l44-18zM681.500 544.500l44 8-44 8.500"/>
              <circle cx="549" cy="552.500" r="18" fill="#ff0"/>
              <g class="mesh" stroke-dasharray="1 2"><circle cx="549" cy="552.500" r="6"/><circle cx="549" cy="552.500" r="9"/><circle cx="549" cy="552.500" r="12"/><circle cx="549" cy="552.500" r="14"/></g>
              <path d="M555 550.500h10M555 555.500h10" stroke="#f00" stroke-dasharray="1 2"/><path d="M547.500 538v8M551.500 538v8" stroke="#0f0" stroke-dasharray="1 2"/>
              <path class="ucs" d="M503.500 508v28.500h24M502.500 535.500h3v3h-3zM504 508.500h1M504 513.500h2M526 535.500h2v2h-2M531 534v4"/>
            </svg>
          </div>
          <div class="sheets">
            <button class="sheet on"><svg viewBox="0 0 70 15" preserveAspectRatio="none"><path d="M0 0c4 3 3 14 9 14.500h52c6-.5 5-11.500 9-14.500"/></svg><span>Модель</span></button>
            <button class="sheet"><svg viewBox="0 0 70 15" preserveAspectRatio="none"><path d="M0 0c4 3 3 14 9 14.500h52c6-.5 5-11.500 9-14.500"/></svg><span>Sheet1</span></button>
            <button class="sheet"><svg viewBox="0 0 70 15" preserveAspectRatio="none"><path d="M0 0c4 3 3 14 9 14.500h52c6-.5 5-11.500 9-14.500"/></svg><span>Sheet2</span></button>
          </div>
        </section>
        <div class="vsplit"></div>
        <aside class="props">
          <div class="ptitle"><h2>Свойства</h2><button aria-label="Закрыть свойства"><svg width="9" height="9"><use href="#x"/></svg></button></div>
          <div class="pbody">
            <div class="combo"><select aria-label="Выбор объекта"><option>Нет выбора</option></select><span class="arr"><svg width="10" height="6"><use href="#chev"/></svg></span></div>
            <div class="ptools">
              <button aria-label="Выбрать по фильтру"><svg width="16" height="16" viewBox="0 0 16 16"><path d="M1 1.500h14v13H1z" fill="none" stroke="#000" stroke-width="1.500" stroke-dasharray="2 1"/><circle cx="9" cy="7" r="3.500" fill="#cfe0fa" stroke="#5b8fe0"/><path d="M4 6.500h6v6H4z" fill="none" stroke="#12a84a" stroke-width="1.500"/></svg></button>
              <button aria-label="Выбрать несколько"><svg width="20" height="20" viewBox="0 0 20 20"><path d="M1.500 1v12l3-3M4.500 1v13l3-3" fill="#fff" stroke="#222"/><path d="M7.500 1.500v14l3-3 3 6.500 2.500-1-3-6.500h4.500z" fill="#fff" stroke="#222" stroke-width="1.200"/></svg></button>
              <button aria-label="Выбрать объект"><svg width="20" height="20" viewBox="0 0 20 20"><path d="M1.500 1.500h14v10h-14z" fill="#a8a8a8" stroke="#333"/><path d="M4 3.500h9v6H4z" fill="#f1f1f1" stroke="#444"/><path d="M5 14h7" stroke="#444" stroke-width="2"/><path d="M10.500 5.500v11l2.500-2.500 2 4.500 2-1-2-4.500h3.500z" fill="#fff" stroke="#222"/></svg></button>
              <button aria-label="Быстрый выбор"><svg width="20" height="20" viewBox="0 0 20 20"><path d="M1.500 1.500h12v9h-12z" fill="#a8a8a8" stroke="#555"/><path d="M4 3.500h7v5H4z" fill="#f1f1f1" stroke="#555"/><path d="M3 13h8" stroke="#555" stroke-width="2"/><path d="M15 6l-6 6h3l-3 6 8-8h-3l3-4z" fill="#f6c52a" stroke="#b7860f" stroke-width=".8"/></svg></button>
              <button aria-label="Справка"><svg width="20" height="20" viewBox="0 0 20 20"><rect x=".5" y=".5" width="19" height="19" rx="1.500" fill="#5e93c8" stroke="#2c578a"/><path d="M7 7.500q0-3 3-3t3 2.500q0 1.500-1.500 2.500T10 12" fill="none" stroke="#fff" stroke-width="2.200"/><circle cx="10" cy="15" r="1.400" fill="#fff"/></svg></button>
            </div>
            <div class="scrollbox">
              <div class="groups">
                <section class="group">
                  <h3>Общая информация<svg width="9" height="5"><path d="M0 5h9L4.500 .5z"/></svg></h3>
                  <div class="rows">
                    <div class="row"><svg width="18" height="18" viewBox="0 0 18 18"><path d="M2 12c3 6 11 6 12 0l-2-3-8 1z" fill="#2c62d4"/><path d="M2 6l6-4 4 6-6 5z" fill="#e4e4e4" stroke="#334" stroke-width="1.200"/><path d="M3 5q-2-4 1-4t6 7" fill="none" stroke="#223a70" stroke-width="1.300"/><path d="M16.500 1l-3 8" stroke="#c9862d" stroke-width="2.500"/><path d="M13 8l-2 6q3 0 4-5z" fill="#d09a3a"/></svg><div class="combo"><span class="pre ringed"><svg width="14" height="14"><use href="#ring"/></svg></span><select aria-label="Цвет"><option>ByLayer</option></select><span class="arr"><svg width="10" height="6"><use href="#chev"/></svg></span></div></div>
                    <div class="row"><svg width="18" height="12"><use href="#layers"/></svg><div class="combo"><select aria-label="Слой объекта"><option>0</option></select><span class="arr"><svg width="10" height="6"><use href="#chev"/></svg></span></div></div>
                    <div class="row"><svg width="16" height="16" viewBox="0 0 16 16"><path d="M0 2h16" stroke="#000" stroke-width="2"/><path d="M0 5.500h16M0 9.500h16" stroke="#000" stroke-dasharray="3 1"/><path d="M1 7.500h15M1 11.500h15" stroke="#000" stroke-dasharray="1 2"/><path d="M0 14h16" stroke="#000" stroke-width="2" stroke-dasharray="2 2"/></svg><div class="combo"><select aria-label="Тип линии"><option>ByLayer &nbsp; &nbsp; Solid Line</option></select><span class="arr"><svg width="10" height="6"><use href="#chev"/></svg></span></div></div>
                    <div class="row"><svg width="16" height="16" viewBox="0 0 16 16"><path d="M0 2h16" stroke="#000" stroke-width="2" stroke-dasharray="6 2 3 1"/><path d="M0 6h16" stroke="#000" stroke-width="2" stroke-dasharray="4 1"/><path d="M0 10h16" stroke="#000" stroke-width="2" stroke-dasharray="3 2"/><path d="M0 14h16" stroke="#000" stroke-width="2" stroke-dasharray="2 1"/></svg><input type="text" aria-label="Масштаб линии" value="1.00"></div>
                    <div class="row"><svg width="16" height="16" viewBox="0 0 16 16"><path d="M0 0h16v4H0zM0 6h16v3H0zM0 11h16v2H0zM0 15h16v1H0z"/></svg><div class="combo"><span class="pre tight"><svg width="32" height="3"><path d="M0 1.500h32" stroke="#000"/></svg></span><select aria-label="Вес линии"><option>ByLayer</option></select><span class="arr"><svg width="10" height="6"><use href="#chev"/></svg></span></div></div>
                    <div class="row"><svg width="18" height="18" viewBox="0 0 18 18"><circle cx="8" cy="8" r="7.500" fill="#1e66c8" stroke="#123d80"/><path d="M3 3q4-3 6 0t-2 4-5 1M9 10q4-3 5 0t-3 4zM11 2l3 3-2 2z" fill="#38b24a"/><path d="M6 13.500h10" stroke="#222" stroke-width="4"/><path d="M7 13.500h3M12 13.500h3" stroke="#ddd" stroke-width="1.500"/></svg><input type="text" aria-label="Гиперссылка" value=""></div>
                    <div class="row"><svg width="20" height="18" viewBox="0 0 20 18"><path d="M0 0h20v18H0z" fill="#fafafa"/><path d="M1 1h6v5H1zM13 1h6v5h-6zM7 6h6v6H7z" fill="#a8a8a8"/><path d="M1 12h6v5H1zM13 12h6v5h-6z" fill="#808080"/></svg><input type="text" aria-label="Прозрачность" value="ByLayer"></div>
                  </div>
                </section>
                <section class="group">
                  <h3>Стиль печати<svg width="9" height="5"><path d="M0 5h9L4.500 .5z"/></svg></h3>
                  <div class="rows">
                    <div class="row"><svg width="16" height="16" viewBox="0 0 16 16"><path d="M0 0h3v16H0z" fill="#f05b45"/><path d="M4 0h5v16H4z" fill="#3fbf68"/><path d="M10 0h6v16h-6z" fill="#dfeafc"/><path d="M10 5l6-6M10 10l6-6M10 15l6-6M12 17l4-4" stroke="#2b6fd8" stroke-width="1.800"/></svg><div class="combo"><select aria-label="Стиль печати объекта"><option>ByLayer</option></select><span class="arr"><svg width="10" height="6"><use href="#chev"/></svg></span></div></div>
                    <div class="row"><svg width="16" height="16" viewBox="0 0 16 16"><path d="M.5 1.500h12v14H.5z" fill="#eee" stroke="#777"/><path d="M2 7h3M6 7h3" stroke="#000" stroke-width="2"/><path d="M15.500 .5L8 9" stroke="#a9741f" stroke-width="2.200"/><path d="M8 8q-4 1-4 5 4 0 5.500-4z" fill="#222"/></svg><div class="combo"><select aria-label="Таблица стилей"><option>Нет</option></select><span class="arr"><svg width="10" height="6"><use href="#chev"/></svg></span></div></div>
                    <div class="row"><svg width="16" height="16" viewBox="0 0 16 16"><path d="M0 0h3v15l-3 1z" fill="#f05b45"/><path d="M4 0h5v7l-5 5z" fill="#3fbf68"/><path d="M10 0h6l-6 6z" fill="#8fb8f0"/><path d="M14 3h2v2h-4zM10 7h6v2H8zM6 11h10v2H4zM2 15h14v1H1z"/></svg><input class="ro" type="text" aria-label="Присвоенный стиль" value="Нет" readonly></div>
                  </div>
                </section>
                <section class="group">
                  <h3>Вид<svg width="9" height="5"><path d="M0 5h9L4.500 .5z"/></svg></h3>
                  <div class="rows">
                    <div class="row"><svg width="16" height="16" viewBox="0 0 16 16"><circle cx="8" cy="8" r="7.300" fill="#f5f5f5" stroke="#333" stroke-width="1.300"/><circle cx="8" cy="8" r="1.800" fill="#f2c21b" stroke="#000"/></svg><input class="ro" type="text" aria-label="Центр X" value="0.47" readonly></div>
                  </div>
                </section>
              </div>
              <div class="scroll"><svg width="9" height="5"><path d="M0 5h9L4.500 .5z"/></svg><i></i><svg width="9" height="5"><path d="M0 0h9L4.500 4.500z"/></svg></div>
            </div>
          </div>
        </aside>
      </div>
      <section class="cmd">
        <div class="ptitle"><h2>Окно команд</h2><button aria-label="Закрыть окно команд"><svg width="9" height="9"><use href="#x"/></svg></button></div>
        <div class="log"><p><b>:</b>Открытие файла чертежа "R2007"</p><p><b>:</b></p></div>
        <label class="prompt"><span>:</span><input type="text" aria-label="Команда"></label>
      </section>
    </div>
  </main>

  <footer class="status">
    <span class="app">CorelCAD 2017™ x64</span>
    <div class="sg1"><button>Привязка</button><button>Сетка</button><button>Орто</button></div>
    <div class="sg1"><button class="act">Полярный</button><button class="act">ОПривязка</button><button class="act">ОСлед</button><button class="act">QInput</button><button>ТолщинаЛ</button><button class="act">МОДЕЛЬ</button></div>
    <div class="sg1"><button class="note">Надпись<svg width="8" height="5" viewBox="0 0 8 4"><use href="#down"/></svg></button><span>(1:1)</span></div>
    <span class="coords">(-0.80,0.95,0.00)</span>
  </footer>
</div>
</body>
</html>
```
FILE: styles.css
```
* { box-sizing: border-box; }
body { margin: 0; height: 100vh; padding: 0 1px 1px 0; background: #fff; font: 11px/14px "Noto Sans", "Open Sans", sans-serif; color: #000; }
h1, h2, h3, p { margin: 0; }
button, select, input { font: inherit; color: inherit; margin: 0; padding: 0; border: 0; background: none; border-radius: 0; }
select { appearance: none; }
a { color: inherit; text-decoration: none; }
svg { display: block; flex: none; }
.defs { position: absolute; width: 0; height: 0; }
.i { width: 16px; height: 16px; overflow: visible; }

.k { fill: none; stroke: #000; }
.b { fill: none; stroke: #00f; }
.g { fill: none; stroke: #444; }
.c { fill: none; stroke: #2a86e0; }
.r { fill: #b8455a; stroke: #7d2b3a; stroke-width: 0.5px; }
.w { fill: #fff; stroke: #000; }
.y { fill: #f5c400; stroke: #222; stroke-width: 0.8px; }
.lit { color: #f8b72a; }
.off { color: #e4e4e4; }

.window { height: 100%; border: 1px solid #1f4378; background: #f0f0f0; display: flex; flex-direction: column; overflow: hidden; }

/* title and menu */
.head { display: flex; height: 58px; border-bottom: 1px solid #fff; }
.logo { width: 28px; height: 38px; margin: 6px 9px 0 8px; }
.head-main { flex: 1; min-width: 0; display: flex; flex-direction: column; }
.titlebar { display: flex; height: 34px; position: relative; padding-top: 6px; }
.combo { display: flex; align-items: center; height: 20px; border: 1px solid #a0a0a4; background: #fff; min-width: 0; }
.combo select { flex: 1; min-width: 0; padding-left: 1px; height: 18px; overflow: hidden; }
.pre { padding: 0 6px 0 5px; }
.pre.ringed { padding: 2px 1px 0 5px; }
.pre.tight { padding: 0 1px 0 3px; }
.arr { width: 17px; align-self: stretch; flex: none; display: flex; align-items: center; justify-content: center; background: #e1e1e1; border: 1px solid #a8a8ac; border-width: 0 1px 0 1px; }
.workspace { width: 159px; }
.workspace select { padding-left: 2px; }
.quick { display: flex; padding-left: 1px; height: 22px; }
.quick button, .band button, .std button { display: flex; align-items: center; justify-content: center; width: 27px; height: 22px; flex: none; }
.std .slim, .quick .slim { width: 24px; }
.std .caret, .quick .caret { width: 12px; }
.quick .more { width: 14px; }
.dim { color: #888; }
.titlebar h1 { position: absolute; left: 0; right: 30px; top: 6px; text-align: center; font-size: 15px; line-height: 22px; font-weight: 400; color: #4c4c4c; pointer-events: none; }
.winbtns { margin-left: auto; display: flex; gap: 27px; padding-right: 16px; height: 16px; }
.mdi { margin-left: auto; display: flex; gap: 10px; padding-right: 7px; height: 16px; }
.winbtns button, .mdi button { width: 9px; display: flex; align-items: center; justify-content: center; }
.menubar { display: flex; flex: 1; }
.menubar nav { display: flex; gap: 18px; padding: 5px 0 0 7px; line-height: 16px; }

/* toolbars */
.bar { display: flex; align-items: center; height: 29px; border-bottom: 1px solid #a0a0a0; }
.grip { width: 12px; height: 23px; flex: none; background: radial-gradient(circle, #b4b4b4 1px, transparent 1px) 50% 0 / 4px 4px repeat-y; }
.sep { width: 6px; height: 20px; flex: none; background: linear-gradient(#8c8c8c, #8c8c8c) 50% 0 / 1px 100% no-repeat; }
.bands { display: grid; grid-template-columns: 333px 36px 170px 1fr; grid-template-rows: 25px 5px 25px 5px; }
.band { display: flex; border-bottom: 1px solid #a0a0a0; min-width: 0; }
.layers { grid-area: 1 / 1 / 2 / 3; border-right: 1px solid #a0a0a0; padding-right: 5px; background: #f0f0f0; }
.layers .lay { width: 34px; }
.layers .layer { flex: 1; }
.layers .lay:last-child { width: 29px; }
.layers .pre { padding: 0 3px 0 5px; }
.props-bar { grid-area: 1 / 3 / 3 / 5; align-items: center; }
.props-bar .grip, .cons .grip { width: 9px; }
.props-bar .combo { width: 117px; }
.geo { grid-area: 2 / 1 / 4 / 2; border-right: 1px solid #a0a0a0; align-items: center; }
.geo .grip { width: 7px; }
.dims { grid-area: 3 / 2 / 4 / 4; border-right: 1px solid #a0a0a0; margin-right: 4px; }
.dims .grip { width: 8px; height: 20px; }
.cons { grid-area: 3 / 4 / 5 / 5; align-items: center; border-left: 1px solid #a0a0a0; }

/* workspace */
.work { flex: 1; min-height: 0; display: grid; grid-template-columns: 33px 31px 31px 1fr; }
.col { border: 1px solid #a0a0a0; border-left: 0; display: flex; flex-direction: column; align-items: stretch; }
.col button { height: 26px; flex: none; display: flex; align-items: center; justify-content: center; }
.col .expand { height: 13px; }
.hgrip { height: 9px; margin: 0 4px; flex: none; background: radial-gradient(circle, #b4b4b4 1px, transparent 1px) 0 50% / 4px 4px repeat-x; }
.hsep { height: 6px; margin: 0 3px; flex: none; background: linear-gradient(#8c8c8c, #8c8c8c) 0 50% / 100% 1px no-repeat; }
.center { min-width: 0; min-height: 0; display: flex; flex-direction: column; }
.upper { flex: 1; min-height: 0; display: flex; }
.docs { flex: 1; min-width: 0; display: flex; flex-direction: column; border-top: 1px solid #a0a0a0; }
.tabs { display: flex; height: 28px; padding: 1px 0 4px 2px; background: #fff; border-bottom: 1px solid #a8a8a8; }
.tab { display: flex; align-items: center; width: 197px; padding-right: 13px; background: #f0f0f0; border: 1px solid #c0c0c0; border-bottom-color: #a8a8a8; color: #333; }
.tab a { flex: 1; text-align: center; }
.tab.on { width: 199px; background: #fff; border-color: #fff; }
.tab.on a { padding-left: 6px; }
.tab button { color: #444; }
.add { width: 27px; background: #e1e1e1; border: 1px solid #a8a8a8; display: flex; align-items: center; justify-content: center; }
.rest { flex: 1; background: #efeff1; border-bottom: 1px solid #a8a8a8; }
.canvas { flex: 1; min-height: 0; background: #000; display: grid; grid-template: 1fr 1fr / 1fr 1fr; padding: 2px 1px 1px 2px; }
.vp { width: 100%; height: 100%; min-width: 0; min-height: 0; border: 1px solid #fff; fill: none; shape-rendering: crispEdges; }
.v2 { border-left: 0; }
.v3 { border-top: 0; }
.v4 { border-width: 4px; width: calc(100% + 2px); height: calc(100% + 1px); margin: -1px 0 0 -2px; background: #000; position: relative; }
.sb { stroke: #00f; }
.sg { stroke: #0f0; }
.sr { stroke: #f00; }
.mesh { stroke: #000; }
.ucs { stroke: #fff; }
.sheets { display: flex; height: 16px; }
.sheet { position: relative; height: 15px; padding: 0; margin-right: -5px; width: 69px; line-height: 15px; }
.sheet svg { position: absolute; left: 0; top: 0; width: 100%; height: 15px; fill: #c8c8c8; stroke: #000; }
.sheet span { position: relative; }
.sheet.on { width: 71px; font-weight: 700; margin-right: -3px; z-index: 1; }
.sheet.on svg { fill: #fff; }
.vsplit { width: 4px; background: linear-gradient(90deg, #fff 2px, #808080 2px, #808080 3px, #fff 3px); }

/* side panel */
.props { flex: 0 0 302px; display: flex; flex-direction: column; padding-right: 2px; min-height: 0; }
.ptitle { display: flex; align-items: center; justify-content: space-between; height: 24px; flex: none; padding: 0 7px 0 4px; border: 1px solid #9a9aa4; background: #dfe3ff; box-shadow: inset 0 0 0 1px #fff; }
.ptitle h2 { font-size: 11px; }
.pbody { flex: 1; min-height: 0; display: flex; flex-direction: column; padding: 13px 11px 12px 11px; }
.pbody .combo { flex: none; }
.ptools { display: flex; gap: 8px; padding: 6px 0 7px 1px; }
.ptools button { width: 25px; height: 24px; border: 1px solid #b4b4b4; background: #e3e3e3; display: flex; align-items: center; justify-content: center; }
.scrollbox { flex: 1; min-height: 0; display: flex; border: 1px solid #828790; overflow: hidden; padding: 9px 1px 0 9px; }
.groups { flex: 1; display: flex; flex-direction: column; gap: 5px; height: 0; }
.group { flex: none; border: 1px solid #dadada; }
.group h3 { display: flex; align-items: center; justify-content: space-between; height: 21px; padding: 0 5px 0 4px; font-size: 11px; border: 1px solid #828790; background: #dfe3ff; box-shadow: inset 0 0 0 1px #fff; }
.rows { display: grid; gap: 2px; padding-top: 12px; }
.row { display: grid; grid-template-columns: 39px 1fr; align-items: center; height: 20px; }
.row > svg { justify-self: center; }
.row input { width: 100%; height: 20px; min-width: 0; border: 1px solid #a8a8b0; background: #fff; padding: 1px 2px 0; }
.row input.ro { background: #b1cdec; color: #333; }
.scroll { width: 14px; margin-left: 11px; display: flex; flex-direction: column; align-items: center; padding: 0 0 5px; margin-top: -4px; }
.scroll i { width: 14px; flex: 0 1 180px; margin: 6px 0 auto; background: #cdcdcd; }

/* command window */
.cmd { height: 114px; flex: none; display: flex; flex-direction: column; padding: 4px 2px 0 0; background: linear-gradient(#fff 1px, #808080 1px, #808080 2px, #f0f0f0 2px, #fff 3px); }
.log { flex: 1; border: 1px solid #82828c; background: #fff; padding: 21px 4px 0; font: 13px/16px "Liberation Sans", Arial, sans-serif; }
.log b { font-weight: 400; color: #3c78b4; margin-right: 3px; }
.prompt { height: 16px; background: #fff; display: flex; padding-left: 5px; color: #b4780a; }
.prompt input { flex: 1; padding-left: 3px; outline: 0; }

/* status bar */
.status { display: flex; align-items: center; height: 32px; flex: none; padding-left: 4px; line-height: 16px; }
.app { width: 194px; }
.sg1 { display: flex; align-items: center; gap: 8px; margin-right: 12px; }
.status button { height: 20px; padding: 0 5px; border: 1px solid #adadad; background: #e1e1e1; line-height: 18px; }
.status button.act { background: #cce4f7; border-color: #00559b; }
.status .note { display: flex; align-items: center; gap: 12px; padding: 0 8px 0 4px; }
```
